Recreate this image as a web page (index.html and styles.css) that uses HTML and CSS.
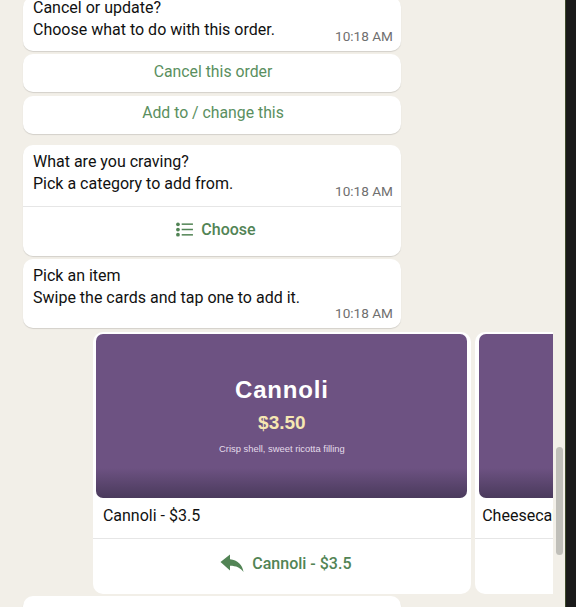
FILE: index.html
```html
<!DOCTYPE html>
<html lang="en">
<head>
<meta charset="utf-8">
<title>Order chat</title>
<link rel="stylesheet" href="styles.css">
</head>
<body>
<div class="app">
  <main class="panel">
    <div class="feed">
      <div class="bubble first">
        <div class="msg">
          <p>Cancel or update?<br>Choose what to do with this order.</p>
          <span class="time">10:18 AM</span>
        </div>
      </div>
      <div class="quick q1">Cancel this order</div>
      <div class="quick q2">Add to / change this</div>
      <div class="bubble second">
        <div class="msg">
          <p>What are you craving?<br>Pick a category to add from.</p>
          <span class="time">10:18 AM</span>
        </div>
        <div class="action choose">
          <svg class="list-icon" viewBox="0 0 18 16" width="17" height="15" aria-hidden="true">
            <circle cx="2" cy="2.5" r="2"/><circle cx="2" cy="8" r="2"/><circle cx="2" cy="13.5" r="2"/>
            <rect x="6" y="1.5" width="12" height="1.6"/><rect x="6" y="7.2" width="12" height="1.6"/><rect x="6" y="12.9" width="12" height="1.6"/>
          </svg>
          <span>Choose</span>
        </div>
      </div>
      <div class="bubble third">
        <div class="msg">
          <p>Pick an item<br>Swipe the cards and tap one to add it.</p>
          <span class="time">10:18 AM</span>
        </div>
      </div>
      <div class="carousel">
        <article class="card">
          <div class="art">
            <h2>Cannoli</h2>
            <div class="price">$3.50</div>
            <div class="desc">Crisp shell, sweet ricotta filling</div>
          </div>
          <div class="caption">Cannoli - $3.5</div>
          <div class="action reply">
            <svg class="reply-icon" viewBox="0 0 24 20" width="24" height="20" aria-hidden="true">
              <path d="M0.5 9 L10 1.5 V6.2 C17.5 7 22.5 11.5 23.5 19 C20.5 14.8 16 12.8 10 12.8 V17.5 Z"/>
            </svg>
            <span>Cannoli - $3.5</span>
          </div>
        </article>
        <article class="card">
          <div class="art"></div>
          <div class="caption">Cheesecake - $4.5</div>
          <div class="action reply"></div>
        </article>
      </div>
      <div class="bubble last"></div>
    </div>
    <div class="scrollbar"></div>
  </main>
  <div class="rail"></div>
</div>
</body>
</html>
```
FILE: styles.css
```css
* { box-sizing: border-box; }
html, body { margin: 0; height: 100%; overflow: hidden; }
body { font-family: Roboto, "Liberation Sans", sans-serif; font-size: 16px; color: #111; background: #1a1a1a; }
p, h2 { margin: 0; }

.app { display: flex; width: 576px; height: 607px; }
.panel { position: relative; width: 566px; height: 607px; background: #f2efe8; border-right: 1px solid #3d4a2a; overflow: hidden; }
.rail { flex: 1; background: #1a1a1a; }

.feed { width: 553px; height: 607px; overflow: hidden; padding-left: 23px; display: flex; flex-direction: column; }

.bubble { flex: none; width: 378px; background: #fff; border-radius: 10px; box-shadow: 0 1px 1px rgba(0, 0, 0, .13); }
.first { margin-top: -3px; height: 54px; }
.second { margin-top: 11px; height: 111px; }
.third { margin-top: 3px; height: 69px; }
.last { margin-top: 2px; height: 40px; }

.msg { position: relative; height: 100%; padding: 6px 10px 0; line-height: 22px; }
.first .msg { padding-top: 0; }
.msg p { white-space: nowrap; }
.second .msg { height: 62px; border-bottom: 1px solid #e6e6e6; }
.time { position: absolute; right: 8px; bottom: 7px; font-size: 13.6px; line-height: 16px; color: #6f6f6f; }

.quick { flex: none; width: 378px; height: 38px; padding-left: 2px; background: #fff; border-radius: 10px; box-shadow: 0 1px 1px rgba(0, 0, 0, .13); color: #5a8f60; font-size: 15.8px; text-align: center; line-height: 36px; }
.q1 { margin-top: 3px; }
.q2 { margin-top: 4px; line-height: 34px; }

.action { display: flex; align-items: center; justify-content: center; gap: 8px; padding-left: 8px; color: #528455; font-weight: 500; }
.action svg { fill: #528455; flex: none; }
.choose { height: 44px; }

.carousel { flex: none; margin-top: 4px; margin-left: 69.9px; display: flex; gap: 4.3px; height: 262px; }
.card { flex: none; width: 378px; height: 262px; padding-top: 2px; background: #fff; border-radius: 10px; }
.art { height: 164px; margin: 0 3.5px; border-radius: 7px; background: linear-gradient(to bottom, #6d5282 0, #6d5282 134px, #4a3a5c 164px); text-align: center; color: #fff; font-family: "Liberation Sans", Arial, sans-serif; padding-top: 41px; }
.art h2 { font-size: 24px; line-height: 30px; font-weight: 700; letter-spacing: .8px; }
.price { margin-top: 7px; font-size: 19px; line-height: 22px; font-weight: 700; color: #f6e7b2; }
.desc { margin-top: 9px; font-size: 9.4px; line-height: 12px; color: #e4dcea; }
.caption { height: 41px; padding: 7px 7px 0; line-height: 22px; border-bottom: 1px solid #e6e6e6; white-space: nowrap; overflow: hidden; }
.card:first-child .caption { padding-left: 10px; }
.reply { height: 48px; }

.scrollbar { position: absolute; left: 556px; top: 447px; width: 7px; height: 108px; border-radius: 4px; background: #c0bfb9; }
```
